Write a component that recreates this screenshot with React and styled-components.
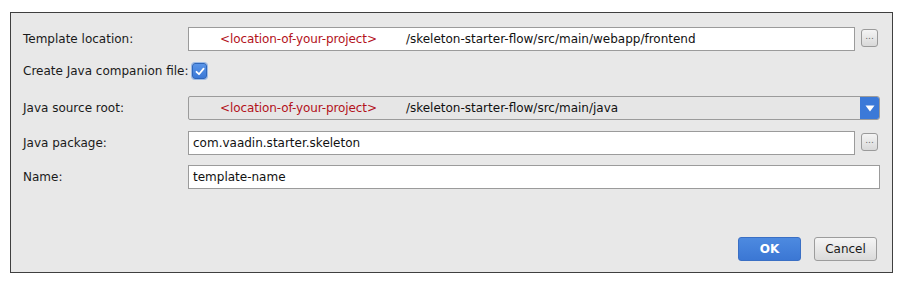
import React from "react";
import styled, { createGlobalStyle } from "styled-components";

const Global = createGlobalStyle`
  html, body { margin: 0; padding: 0; background: #ffffff; }
  body { font-family: "DejaVu Sans", "Liberation Sans", sans-serif; font-size: 12px; color: #1a1a1a; }
  * { box-sizing: border-box; }
`;

const Page = styled.div`
  padding: 12px 0 0 10px;
  width: 906px;
  height: 286px;
`;

const Dialog = styled.div`
  width: 883px;
  height: 261px;
  border: 1px solid #3f3f3f;
  background: #e8e8e8;
  display: flex;
  flex-direction: column;
  padding: 14px 12px 11px 12px;
`;

const Form = styled.div`
  display: grid;
  grid-template-columns: 165px 1fr;
  grid-template-rows: 24px 25px 25px 24px 24px;
  row-gap: 10px;
`;

const Label = styled.div`
  display: flex;
  align-items: ${(p) => (p.$lift ? "flex-start" : "center")};
  white-space: nowrap;
  padding-top: ${(p) => (p.$lift ? "2px" : "0")};
  line-height: ${(p) => (p.$lift ? "16px" : "normal")};
  height: ${(p) => (p.$lift ? "auto" : "24px")};
`;

const Field = styled.div`
  display: flex;
  align-items: flex-start;
  gap: 6px;
`;

const TextBox = styled.div`
  flex: 1;
  height: 24px;
  border: 1px solid #9b9b9b;
  background: ${(p) => (p.$disabled ? "#e6e6e6" : "#ffffff")};
  display: flex;
  align-items: center;
  padding-left: 4px;
  white-space: nowrap;
  overflow: hidden;
  color: #111;
  border-radius: ${(p) => (p.$combo ? "2px 3px 3px 2px" : "0")};
  position: relative;
`;

const Placeholder = styled.span`
  color: #b3121b;
  margin-left: 27px;
  margin-right: 29px;
  letter-spacing: -0.1px;
`;

const Path = styled.span`
  color: #111111;
`;

const Browse = styled.div`
  width: 17px;
  height: 18px;
  margin-top: 2px;
  border: 1px solid #9a9a9a;
  border-radius: 3px;
  background: linear-gradient(#f4f4f4, #d9d9d9);
  display: flex;
  align-items: center;
  justify-content: center;
  color: #6a6a6a;
  font-size: 9px;
  line-height: 1;
  padding-bottom: 3px;
  margin-right: 2px;
`;

const ComboArrow = styled.div`
  position: absolute;
  right: -1px;
  top: -1px;
  bottom: -1px;
  width: 20px;
  background: #3b79d8;
  border-radius: 0 3px 3px 0;
  display: flex;
  align-items: center;
  justify-content: center;
`;

const Check = styled.div`
  width: 15px;
  height: 16px;
  border-radius: 3px;
  background: linear-gradient(#5a95e8, #3a78d6);
  border: 1px solid #2f66b9;
  box-shadow: 0 0 0 1px #9dbbe6;
  display: flex;
  align-items: center;
  justify-content: center;
  margin-left: 4px;
`;

const Footer = styled.div`
  margin-top: auto;
  display: flex;
  justify-content: flex-end;
  gap: 13px;
  padding-right: 3px;
`;

const Button = styled.button`
  width: 63px;
  height: 24px;
  border-radius: 3px;
  font-family: "DejaVu Sans", "Liberation Sans", sans-serif;
  font-size: 12px;
  padding: 0;
  cursor: default;
  border: 1px solid ${(p) => (p.$primary ? "#3a6fc4" : "#9c9c9c")};
  background: ${(p) =>
    p.$primary ? "linear-gradient(#4d8ae0, #3b77d4)" : "linear-gradient(#f5f5f5, #dadada)"};
  color: ${(p) => (p.$primary ? "#ffffff" : "#1a1a1a")};
  font-weight: ${(p) => (p.$primary ? "bold" : "normal")};
`;

export default function App() {
  return (
    <>
      <Global />
      <Page>
        <Dialog>
          <Form>
            <Label>Template location:</Label>
            <Field>
              <TextBox>
                <Placeholder>&lt;location-of-your-project&gt;</Placeholder>
                <Path>/skeleton-starter-flow/src/main/webapp/frontend</Path>
              </TextBox>
              <Browse>...</Browse>
            </Field>

            <Label $lift style={{ gridColumn: "1 / 3" }}>
              Create Java companion file:
              <Check>
                <svg width="10" height="9" viewBox="0 0 10 9">
                  <path d="M1.5 4.8 L4 7.2 L8.6 1.6" fill="none" stroke="#fff" strokeWidth="1.8" strokeLinecap="round" strokeLinejoin="round" />
                </svg>
              </Check>
            </Label>

            <Label>Java source root:</Label>
            <Field>
              <TextBox $disabled $combo>
                <Placeholder>&lt;location-of-your-project&gt;</Placeholder>
                <Path>/skeleton-starter-flow/src/main/java</Path>
                <ComboArrow>
                  <svg width="10" height="7" viewBox="0 0 10 7">
                    <path d="M0.5 0.5 L9.5 0.5 L5 6.5 Z" fill="#fff" />
                  </svg>
                </ComboArrow>
              </TextBox>
            </Field>

            <Label>Java package:</Label>
            <Field>
              <TextBox>
                <Path>com.vaadin.starter.skeleton</Path>
              </TextBox>
              <Browse>...</Browse>
            </Field>

            <Label>Name:</Label>
            <Field>
              <TextBox>
                <Path>template-name</Path>
              </TextBox>
            </Field>
          </Form>
          <Footer>
            <Button $primary>OK</Button>
            <Button>Cancel</Button>
          </Footer>
        </Dialog>
      </Page>
    </>
  );
}
